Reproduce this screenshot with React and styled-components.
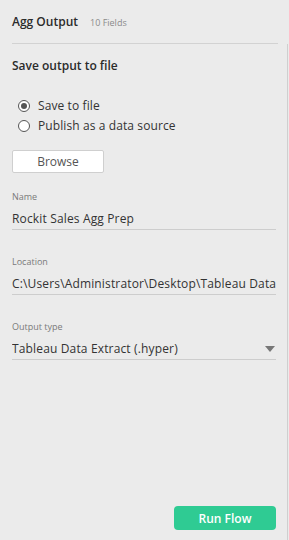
import React, { useState } from "react";
import styled, { createGlobalStyle } from "styled-components";

const GlobalStyle = createGlobalStyle`
  html, body {
    margin: 0;
    padding: 0;
    background: #ebebeb;
  }
  body {
    font-family: "Open Sans", "Liberation Sans", sans-serif;
    color: #333;
  }
`;

const Panel = styled.div`
  width: 289px;
  height: 540px;
  box-sizing: border-box;
  background: #ebebeb;
  display: flex;
  flex-direction: column;
`;

const Header = styled.div`
  display: flex;
  align-items: baseline;
  gap: 12px;
  margin: 0 11px 0 12px;
  padding: 13px 0 13px;
  border-bottom: 1px solid #d2d2d2;
`;

const Title = styled.span`
  font-size: 12px;
  font-weight: 600;
  color: #2b2b2b;
`;

const Sub = styled.span`
  font-size: 9px;
  color: #8a8a8a;
`;

const Body = styled.div`
  flex: 1;
  display: flex;
  flex-direction: column;
  padding: 0 11px 0 12px;
  border-right: 1px solid #cfcfcf;
  margin-right: 1px;
`;

const SectionTitle = styled.div`
  font-size: 12px;
  font-weight: 600;
  color: #2b2b2b;
  margin-top: 13px;
`;

const RadioGroup = styled.div`
  display: flex;
  flex-direction: column;
  gap: 3px;
  margin-top: 23px;
  padding-left: 6px;
`;

const RadioRow = styled.label`
  display: flex;
  align-items: center;
  gap: 8px;
  font-size: 12px;
  letter-spacing: 0.1px;
  color: #333;
  cursor: pointer;
  height: 17px;
`;

const Circle = styled.span`
  width: 12px;
  height: 12px;
  box-sizing: border-box;
  border-radius: 50%;
  border: 1px solid #555;
  background: #fff;
  display: flex;
  align-items: center;
  justify-content: center;
  &::after {
    content: "";
    width: 6px;
    height: 6px;
    border-radius: 50%;
    background: ${(p) => (p.checked ? "#555" : "transparent")};
  }
`;

const Button = styled.button`
  margin-top: 16px;
  width: 92px;
  height: 23px;
  background: #fff;
  border: 1px solid #cfcfcf;
  border-radius: 2px;
  font-family: inherit;
  font-size: 12px;
  color: #555;
  padding: 0;
`;

const Field = styled.div`
  display: flex;
  flex-direction: column;
  margin-top: ${(p) => p.gap || 19}px;
`;

const Label = styled.div`
  font-size: 9px;
  color: #7a7a7a;
  line-height: 12px;
`;

const Value = styled.div`
  display: flex;
  justify-content: space-between;
  align-items: center;
  font-size: 12px;
  letter-spacing: 0.15px;
  color: #333;
  line-height: 17px;
  margin-top: 7px;
  padding-bottom: 2px;
  border-bottom: 1px solid #cdcdcd;
  white-space: nowrap;
  overflow: hidden;
`;

const Caret = styled.span`
  width: 0;
  height: 0;
  border-left: 5px solid transparent;
  border-right: 5px solid transparent;
  border-top: 6px solid #777;
  margin-right: 1px;
`;

const Footer = styled.div`
  margin-top: auto;
  display: flex;
  justify-content: flex-end;
  padding-bottom: 10px;
`;

const RunButton = styled.button`
  width: 102px;
  height: 24px;
  border: none;
  border-radius: 4px;
  background: #2fcb93;
  color: #fff;
  font-family: inherit;
  font-size: 12px;
  font-weight: 600;
  padding: 0;
`;

export default function App() {
  const [mode, setMode] = useState("file");
  return (
    <>
      <GlobalStyle />
      <Panel>
        <Header>
          <Title>Agg Output</Title>
          <Sub>10 Fields</Sub>
        </Header>
        <Body>
          <SectionTitle>Save output to file</SectionTitle>
          <RadioGroup>
            <RadioRow onClick={() => setMode("file")}>
              <Circle checked={mode === "file"} />
              Save to file
            </RadioRow>
            <RadioRow onClick={() => setMode("publish")}>
              <Circle checked={mode === "publish"} />
              Publish as a data source
            </RadioRow>
          </RadioGroup>
          <div>
            <Button>Browse</Button>
          </div>
          <Field gap={18}>
            <Label>Name</Label>
            <Value>Rockit Sales Agg Prep</Value>
          </Field>
          <Field gap={26}>
            <Label>Location</Label>
            <Value>C:\Users\Administrator\Desktop\Tableau Data</Value>
          </Field>
          <Field gap={26}>
            <Label>Output type</Label>
            <Value>
              Tableau Data Extract (.hyper)
              <Caret />
            </Value>
          </Field>
          <Footer>
            <RunButton>Run Flow</RunButton>
          </Footer>
        </Body>
      </Panel>
    </>
  );
}
